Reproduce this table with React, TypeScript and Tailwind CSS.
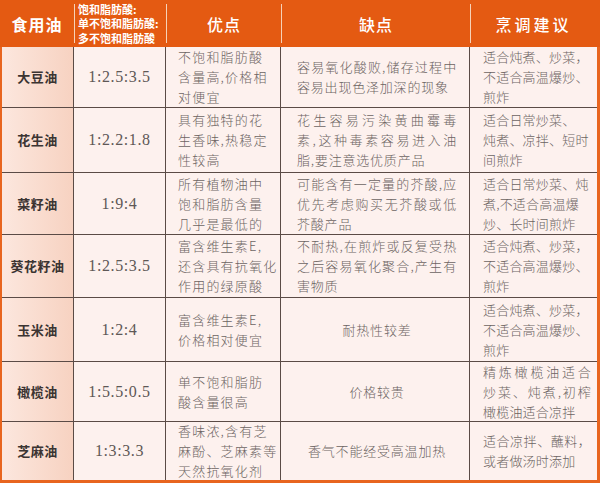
import React from "react"

type Row = {
  name: string
  ratio: string
  pros: string[]
  cons: string[]
  consCenter?: boolean
  cook: string[]
  cookJustify?: boolean
}

const rows: Row[] = [
  {
    name: "大豆油",
    ratio: "1:2.5:3.5",
    pros: ["不饱和脂肪酸", "含量高,价格相", "对便宜"],
    cons: ["容易氧化酸败,储存过程中", "容易出现色泽加深的现象"],
    cook: ["适合炖煮、炒菜，", "不适合高温爆炒、", "煎炸"],
  },
  {
    name: "花生油",
    ratio: "1:2.2:1.8",
    pros: ["具有独特的花", "生香味,热稳定", "性较高"],
    cons: ["花生容易污染黄曲霉毒", "素,这种毒素容易进入油", "脂,要注意选优质产品"],
    cook: ["适合日常炒菜、", "炖煮、凉拌、短时", "间煎炸"],
  },
  {
    name: "菜籽油",
    ratio: "1:9:4",
    pros: ["所有植物油中", "饱和脂肪含量", "几乎是最低的"],
    cons: ["可能含有一定量的芥酸,应", "优先考虑购买无芥酸或低", "芥酸产品"],
    cook: ["适合日常炒菜、炖", "煮,不适合高温爆", "炒、长时间煎炸"],
  },
  {
    name: "葵花籽油",
    ratio: "1:2.5:3.5",
    pros: ["富含维生素E,", "还含具有抗氧化", "作用的绿原酸"],
    cons: ["不耐热,在煎炸或反复受热", "之后容易氧化聚合,产生有", "害物质"],
    cook: ["适合炖煮、炒菜，", "不适合高温爆炒、", "煎炸"],
  },
  {
    name: "玉米油",
    ratio: "1:2:4",
    pros: ["富含维生素E,", "价格相对便宜"],
    cons: ["耐热性较差"],
    consCenter: true,
    cook: ["适合炖煮、炒菜，", "不适合高温爆炒、", "煎炸"],
  },
  {
    name: "橄榄油",
    ratio: "1:5.5:0.5",
    pros: ["单不饱和脂肪", "酸含量很高"],
    cons: ["价格较贵"],
    consCenter: true,
    cook: ["精炼橄榄油适合", "炒菜、炖煮,初榨", "橄榄油适合凉拌"],
    cookJustify: true,
  },
  {
    name: "芝麻油",
    ratio: "1:3:3.3",
    pros: ["香味浓,含有芝", "麻酚、芝麻素等", "天然抗氧化剂"],
    cons: ["香气不能经受高温加热"],
    consCenter: true,
    cook: ["适合凉拌、蘸料，", "或者做汤时添加"],
    cookJustify: true,
  },
]

function Lines({ lines, justify }: { lines: string[]; justify?: boolean }) {
  return (
    <div className="w-full">
      {lines.map((l, i) => (
        <div
          key={i}
          className={
            justify && i < lines.length - 1
              ? "text-justify [text-align-last:justify]"
              : "whitespace-nowrap"
          }
        >
          {l}
        </div>
      ))}
    </div>
  )
}

function HeadSep() {
  return <div className="w-px h-[39px] self-center bg-[#f6d2b8] shrink-0" />
}

export default function App() {
  return (
    <div className="w-[600px] h-[483px] bg-white font-['Noto_Sans_CJK_SC',sans-serif] overflow-hidden">
      {/* header */}
      <div className="flex h-[47px] bg-[#e45a12] text-white">
        <div className="w-[74px] flex items-center justify-center text-[16px] font-bold tracking-[1px]">食用油</div>
        <HeadSep />
        <div className="w-[91px] flex flex-col justify-center pl-[3px] text-[11px] leading-[14.5px] font-bold whitespace-nowrap">
          <span>饱和脂肪酸:</span>
          <span>单不饱和脂肪酸:</span>
          <span>多不饱和脂肪酸</span>
        </div>
        <HeadSep />
        <div className="w-[114px] flex items-center justify-center text-[16px] font-medium tracking-[1px]">优点</div>
        <HeadSep />
        <div className="w-[188px] flex items-center justify-center text-[16px] font-medium tracking-[1px]">缺点</div>
        <HeadSep />
        <div className="flex-1 flex items-center justify-center text-[16px] font-medium tracking-[3px] pr-[4px]">烹调建议</div>
      </div>

      {/* body */}
      <div className="border-l-2 border-r-[3px] border-b-[3px] border-[#e8651f]">
        <div className="grid grid-cols-[72px_92px_115px_189px_127px] grid-rows-[61px_65px_62px_63px_64px_60px_58px] text-[13px] leading-[20px] text-[#6c6462] font-light">
          {rows.map((r, i) => {
            const last = i === rows.length - 1
            const b = last ? "" : "border-b"
            return (
              <React.Fragment key={r.name}>
                <div className={`${b} border-r border-[#5b4b46] bg-gradient-to-r from-[#fce7de] to-[#f7d2c1] flex items-center justify-center font-bold text-[13px] tracking-[0.5px] text-[#3b3432]`}>
                  {r.name}
                </div>
                <div className={`${b} border-r border-[#5b4b46] bg-[#fdf1ee] flex items-center justify-center font-['Liberation_Serif',serif] font-normal text-[16px] tracking-[0.6px] text-[#5e5856]`}>
                  {r.ratio}
                </div>
                <div className={`${b} border-r border-[#5b4b46] bg-[#fdf1ee] flex items-center pl-[12px] pr-[2px] tracking-[1.2px] overflow-hidden`}>
                  <Lines lines={r.pros} />
                </div>
                <div className={`${b} border-r border-[#5b4b46] bg-[#fdf1ee] flex items-center pl-[16px] pr-[12px] tracking-[0.8px] ${r.consCenter ? "justify-center text-center" : ""}`}>
                  <Lines lines={r.cons} justify={!r.consCenter} />
                </div>
                <div className={`${b} border-[#5b4b46] bg-[#fdf1ee] flex items-center pl-[13px] pr-[6px] tracking-[0.2px]`}>
                  <Lines lines={r.cook} justify={r.cookJustify} />
                </div>
              </React.Fragment>
            )
          })}
        </div>
      </div>
    </div>
  )
}
